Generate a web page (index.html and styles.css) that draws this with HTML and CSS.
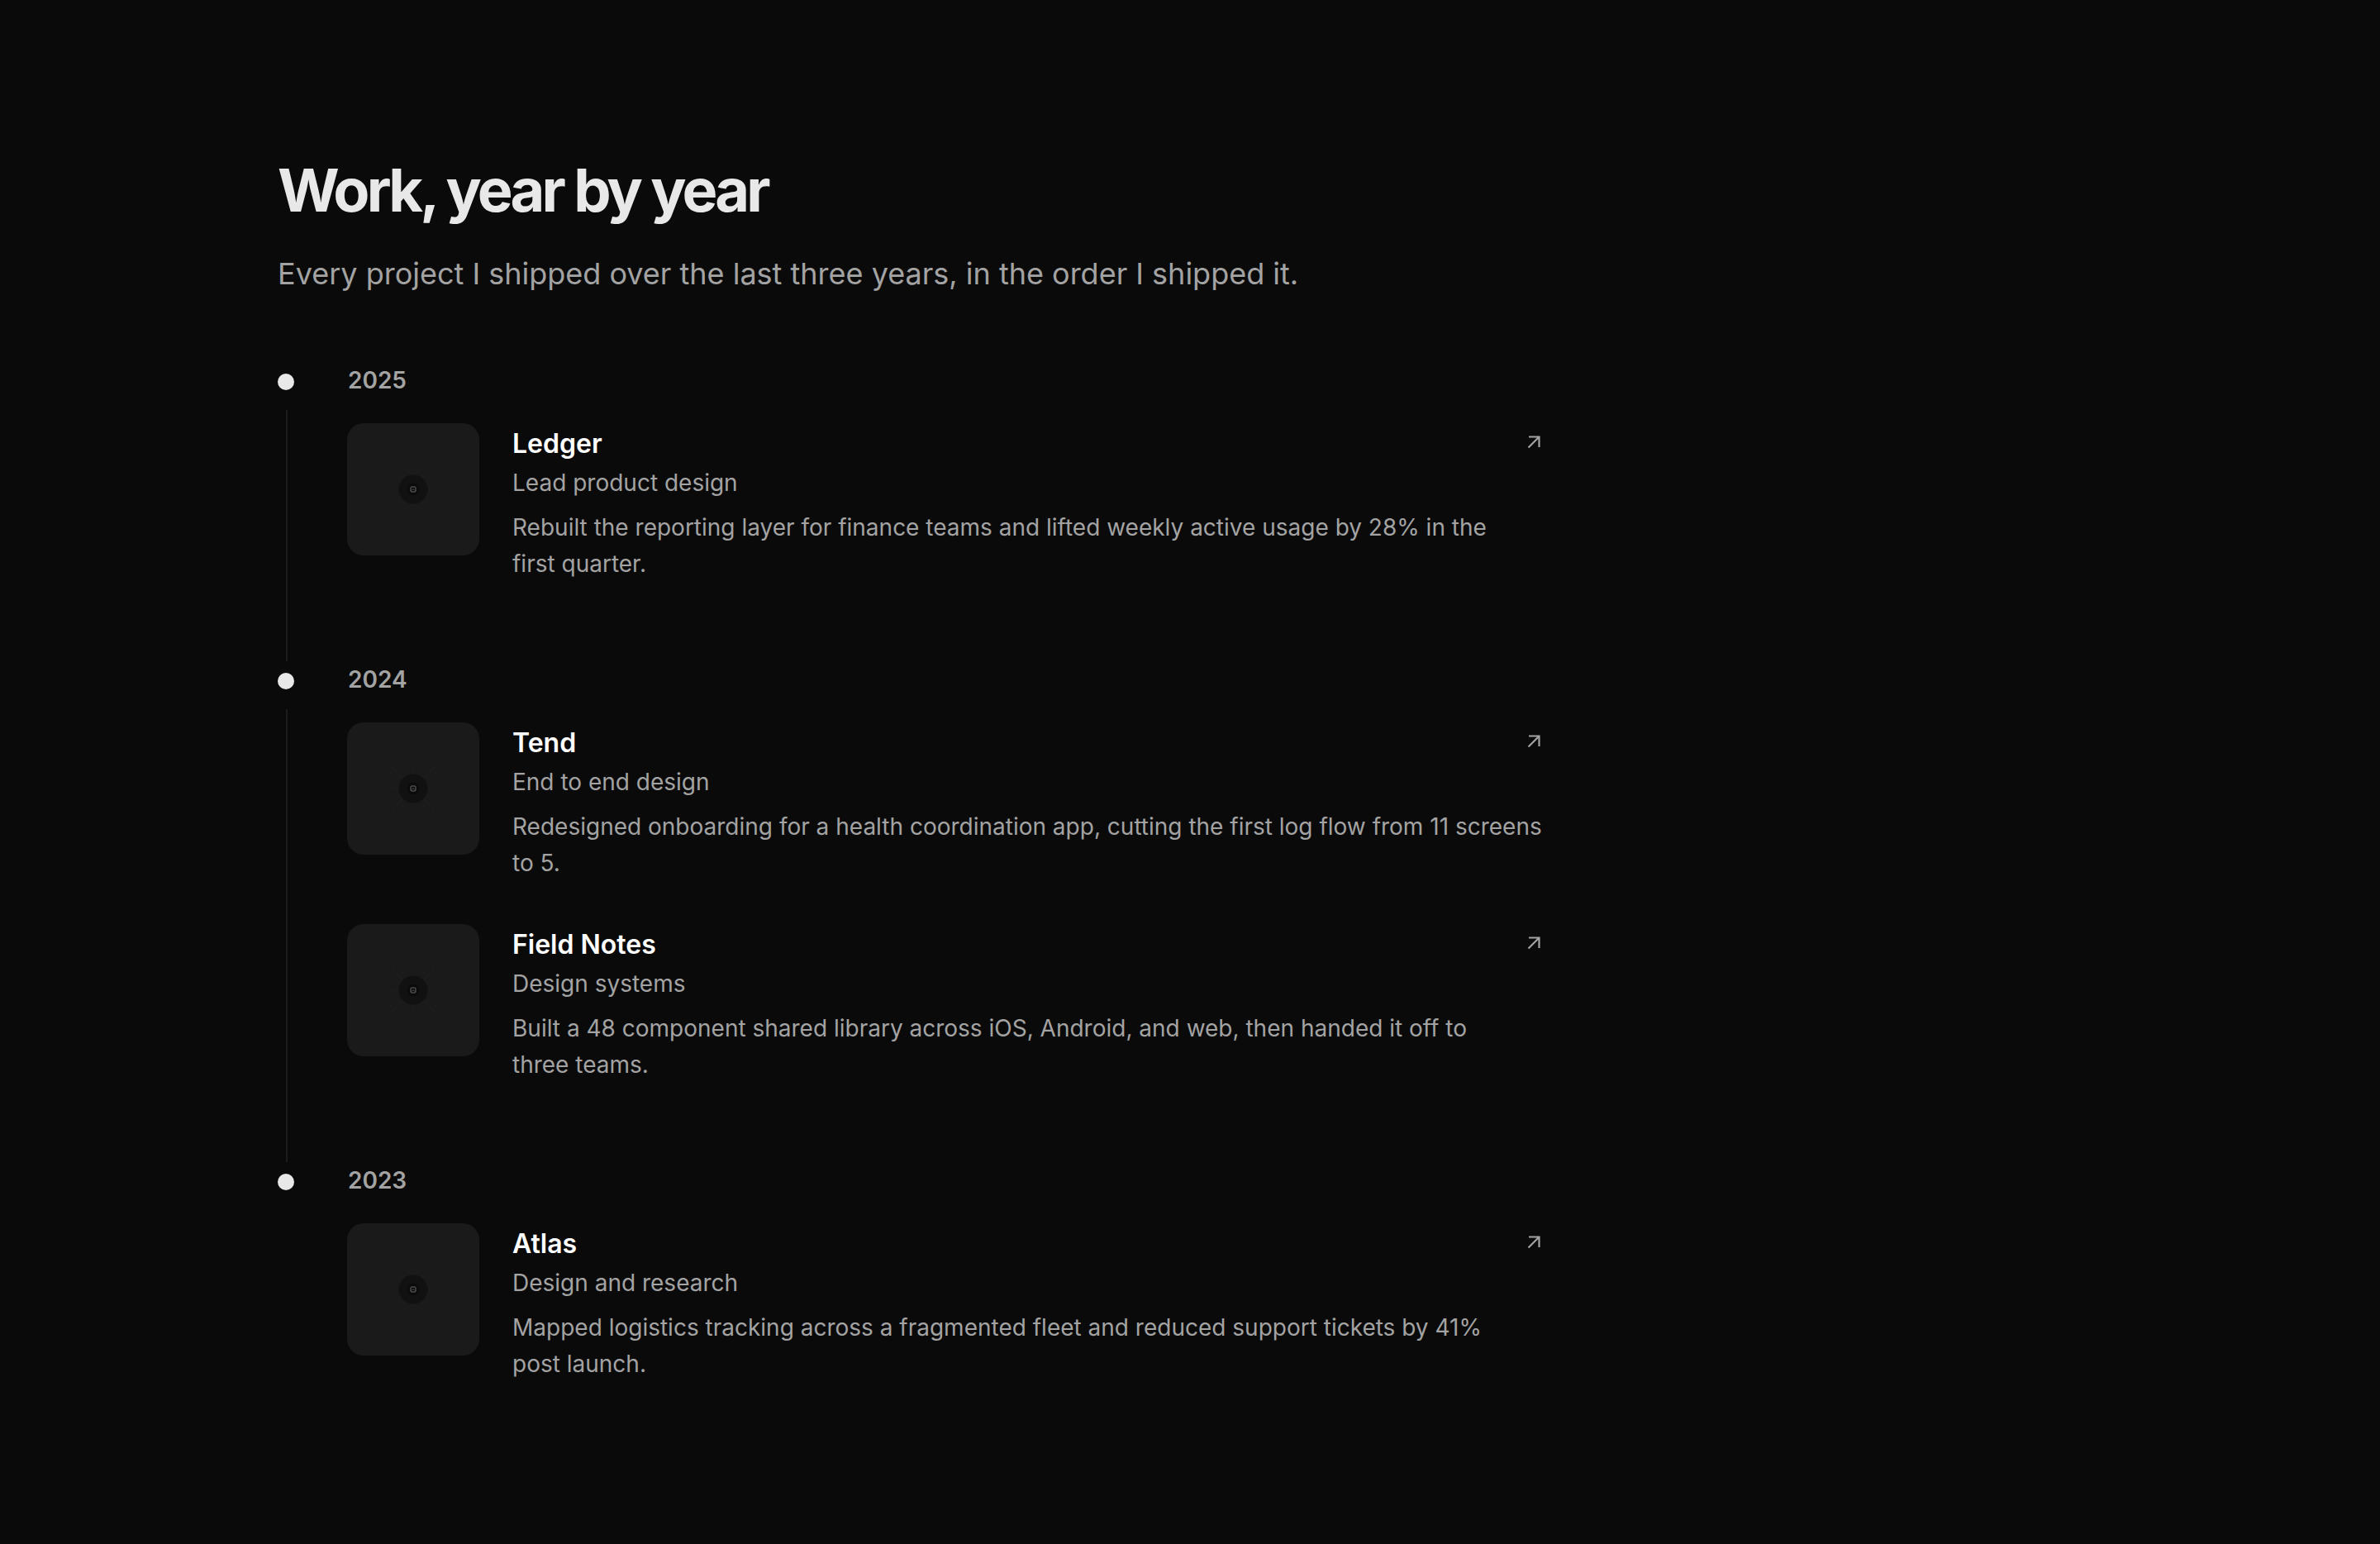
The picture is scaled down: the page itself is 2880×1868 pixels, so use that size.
FILE: index.html
```html
<!DOCTYPE html>
<html lang="en">
<head>
  <meta charset="UTF-8">
  <meta name="viewport" content="width=device-width, initial-scale=1.0">
  <title>Work, year by year</title>
  <link rel="stylesheet" href="styles.css">
</head>
<body>
  <main class="page">
    <header class="intro">
      <h1>Work, year by year</h1>
      <p>Every project I shipped over the last three years, in the order I shipped it.</p>
    </header>

    <div class="timeline">
      <!-- 2025 -->
      <section class="year">
        <div class="year-head"><span class="dot"></span><h2>2025</h2></div>
        <ul class="projects">
          <li class="project">
            <div class="thumb">
              <svg class="ph" viewBox="-40 -40 80 80" width="80" height="80">
                <g stroke="#202020" stroke-width="1">
                  <path d="M-27 0H-18M18 0H27M0 -25V-18M0 18V25" stroke-dasharray="2 3"/>
                  <path d="M-13 -13L-26 -26M13 -13L26 -26M-13 13L-26 26M13 13L26 26"/>
                </g>
                <circle r="17.5" fill="#111"/>
                <circle r="7" fill="#0b0b0b"/>
                <rect x="-3" y="-3" width="6" height="6" rx="1" fill="none" stroke="#6a6a6a" stroke-width="1"/>
                <path d="M-2 1.5L0 -0.5L2 1.5" fill="none" stroke="#6a6a6a" stroke-width="0.8"/>
              </svg>
            </div>
            <div class="project-body">
              <div class="project-head">
                <h3>Ledger</h3>
                <svg class="arrow" viewBox="0 0 16 16"><path d="M1.5 14.5L14 2M2 1.5H14.5V14"/></svg>
              </div>
              <p class="role">Lead product design</p>
              <p class="desc">Rebuilt the reporting layer for finance teams and lifted weekly active usage by 28% in the first quarter.</p>
            </div>
          </li>
        </ul>
      </section>

      <!-- 2024 -->
      <section class="year">
        <div class="year-head"><span class="dot"></span><h2>2024</h2></div>
        <ul class="projects">
          <li class="project">
            <div class="thumb">
              <svg class="ph" viewBox="-40 -40 80 80" width="80" height="80">
                <g stroke="#202020" stroke-width="1">
                  <path d="M-27 0H-18M18 0H27M0 -25V-18M0 18V25" stroke-dasharray="2 3"/>
                  <path d="M-13 -13L-26 -26M13 -13L26 -26M-13 13L-26 26M13 13L26 26"/>
                </g>
                <circle r="17.5" fill="#111"/>
                <circle r="7" fill="#0b0b0b"/>
                <rect x="-3" y="-3" width="6" height="6" rx="1" fill="none" stroke="#6a6a6a" stroke-width="1"/>
                <path d="M-2 1.5L0 -0.5L2 1.5" fill="none" stroke="#6a6a6a" stroke-width="0.8"/>
              </svg>
            </div>
            <div class="project-body">
              <div class="project-head">
                <h3>Tend</h3>
                <svg class="arrow" viewBox="0 0 16 16"><path d="M1.5 14.5L14 2M2 1.5H14.5V14"/></svg>
              </div>
              <p class="role">End to end design</p>
              <p class="desc">Redesigned onboarding for a health coordination app, cutting the first log flow from 11 screens to 5.</p>
            </div>
          </li>
          <li class="project">
            <div class="thumb">
              <svg class="ph" viewBox="-40 -40 80 80" width="80" height="80">
                <g stroke="#202020" stroke-width="1">
                  <path d="M-27 0H-18M18 0H27M0 -25V-18M0 18V25" stroke-dasharray="2 3"/>
                  <path d="M-13 -13L-26 -26M13 -13L26 -26M-13 13L-26 26M13 13L26 26"/>
                </g>
                <circle r="17.5" fill="#111"/>
                <circle r="7" fill="#0b0b0b"/>
                <rect x="-3" y="-3" width="6" height="6" rx="1" fill="none" stroke="#6a6a6a" stroke-width="1"/>
                <path d="M-2 1.5L0 -0.5L2 1.5" fill="none" stroke="#6a6a6a" stroke-width="0.8"/>
              </svg>
            </div>
            <div class="project-body">
              <div class="project-head">
                <h3>Field Notes</h3>
                <svg class="arrow" viewBox="0 0 16 16"><path d="M1.5 14.5L14 2M2 1.5H14.5V14"/></svg>
              </div>
              <p class="role">Design systems</p>
              <p class="desc">Built a 48 component shared library across iOS, Android, and web, then handed it off to three teams.</p>
            </div>
          </li>
        </ul>
      </section>

      <!-- 2023 -->
      <section class="year">
        <div class="year-head"><span class="dot"></span><h2>2023</h2></div>
        <ul class="projects">
          <li class="project">
            <div class="thumb">
              <svg class="ph" viewBox="-40 -40 80 80" width="80" height="80">
                <g stroke="#202020" stroke-width="1">
                  <path d="M-27 0H-18M18 0H27M0 -25V-18M0 18V25" stroke-dasharray="2 3"/>
                  <path d="M-13 -13L-26 -26M13 -13L26 -26M-13 13L-26 26M13 13L26 26"/>
                </g>
                <circle r="17.5" fill="#111"/>
                <circle r="7" fill="#0b0b0b"/>
                <rect x="-3" y="-3" width="6" height="6" rx="1" fill="none" stroke="#6a6a6a" stroke-width="1"/>
                <path d="M-2 1.5L0 -0.5L2 1.5" fill="none" stroke="#6a6a6a" stroke-width="0.8"/>
              </svg>
            </div>
            <div class="project-body">
              <div class="project-head">
                <h3>Atlas</h3>
                <svg class="arrow" viewBox="0 0 16 16"><path d="M1.5 14.5L14 2M2 1.5H14.5V14"/></svg>
              </div>
              <p class="role">Design and research</p>
              <p class="desc">Mapped logistics tracking across a fragmented fleet and reduced support tickets by 41% post launch.</p>
            </div>
          </li>
        </ul>
      </section>
    </div>
  </main>
</body>
</html>
```

FILE: styles.css
```css
body {
  margin: 0;
  background: #0a0a0a;
  font-family: Inter, "Noto Sans", sans-serif;
  color: #a3a3a3;
}
.page {
  width: 1536px;
  padding: 190px 0 96px 336px;
}
.intro h1 {
  margin: 0;
  font-size: 72px;
  line-height: 79px;
  font-weight: 700;
  letter-spacing: -0.053em;
  color: #e8e8e8;
}
.intro p {
  margin: 35px 0 0;
  font-size: 36px;
  line-height: 54px;
  color: #a3a3a3;
}
.timeline {
  margin-top: 84px;
}
.year + .year {
  margin-top: 4px;
}
.year-head {
  display: flex;
  align-items: center;
  height: 40px;
}
.dot {
  width: 20px;
  height: 20px;
  border-radius: 50%;
  background: #e8e8e8;
  margin-right: 65px;
}
.year-head h2 {
  margin: 0 0 3px;
  font-size: 28px;
  line-height: 37px;
  font-weight: 600;
  color: #a3a3a3;
}
.projects {
  list-style: none;
  margin: 14px 0 0 10px;
  padding: 16px 0 96px 72px;
  border-left: 2px solid #1c1c1c;
  display: flex;
  flex-direction: column;
  gap: 52px;
}
.year:last-child .projects {
  border-left-color: transparent;
}
.project {
  display: flex;
  gap: 40px;
}
.thumb {
  width: 160px;
  height: 160px;
  flex: none;
  border-radius: 20px;
  background: #1a1a1a;
  display: grid;
  place-items: center;
}
.project-body {
  flex: 1;
  padding-top: 5px;
}
.project-head {
  display: flex;
  justify-content: space-between;
  align-items: flex-start;
}
.project-head h3 {
  margin: 0;
  font-size: 32px;
  line-height: 40px;
  font-weight: 600;
  color: #fff;
}
.arrow {
  width: 16px;
  height: 16px;
  margin: 10px 8px 0 0;
  fill: none;
  stroke: #a3a3a3;
  stroke-width: 2.2;
}
.role {
  margin: 5px 0 0;
  font-size: 28px;
  line-height: 44px;
}
.desc {
  margin: 10px 0 0;
  font-size: 28px;
  line-height: 44px;
  text-wrap: pretty;
}
```
